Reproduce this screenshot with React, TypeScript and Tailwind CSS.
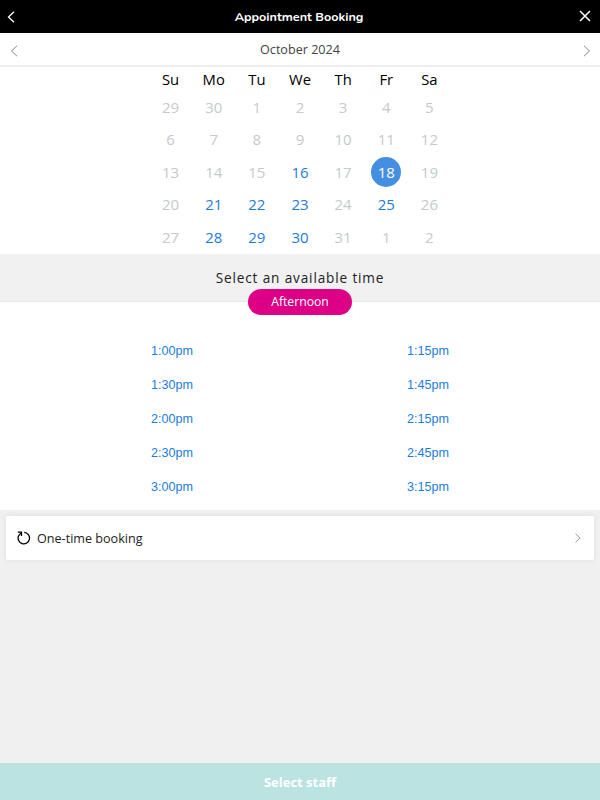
const weekdays = ['Su', 'Mo', 'Tu', 'We', 'Th', 'Fr', 'Sa'];

const days = [
	29, 30, 1, 2, 3, 4, 5,
	6, 7, 8, 9, 10, 11, 12,
	13, 14, 15, 16, 17, 18, 19,
	20, 21, 22, 23, 24, 25, 26,
	27, 28, 29, 30, 31, 1, 2,
];

// positions in the grid, since the leading and trailing days repeat numbers
const available = [17, 22, 23, 24, 26, 29, 30, 31];
const selected = 19;

const times = [
	'1:00pm', '1:15pm',
	'1:30pm', '1:45pm',
	'2:00pm', '2:15pm',
	'2:30pm', '2:45pm',
	'3:00pm', '3:15pm',
];

const Chevron = ({ points, className }: { points: string; className: string }) => (
	<svg viewBox="0 0 8 12" className={className} fill="none" stroke="currentColor">
		<polyline points={points} />
	</svg>
);

const LEFT = '7,0.8 1.5,6 7,11.2';
const RIGHT = '1,0.8 6.5,6 1,11.2';

const dayClass = (index: number) => {
	if (index === selected) return 'bg-[#458fe3] text-white font-normal';
	if (available.includes(index)) return 'text-[#1b7ce0] font-normal';
	return 'text-[#c3cbcc]';
};

const Header = () => (
	<header className="flex h-[33px] items-center justify-between bg-black pr-[9px] pl-[7px] text-white">
		<button className="w-3">
			<Chevron points={LEFT} className="h-3 w-2 stroke-[1.3]" />
		</button>
		<h1 className="pt-px font-['Nunito','Open_Sans',sans-serif] text-[12.6px] font-bold">Appointment Booking</h1>
		<button className="flex w-3 justify-end">
			<svg viewBox="0 0 12 12" className="mb-px size-3 stroke-[1.5]" stroke="currentColor">
				<path d="M1 1l10 10M11 1L1 11" />
			</svg>
		</button>
	</header>
);

const Calendar = () => (
	<section className="h-[221px]">
		<div className="flex h-[34px] items-center justify-between border-b-2 border-[#ebeff0] pt-[3px] px-[9.5px] text-[#7c898c]">
			<Chevron points={LEFT} className="h-3 w-2" />
			<h2 className="text-[12.6px] text-[#444]">October 2024</h2>
			<Chevron points={RIGHT} className="h-3 w-2" />
		</div>
		<div className="mx-auto grid w-[302px] grid-cols-7 text-center text-[15px] font-[370]">
			{weekdays.map((day) => (
				<div key={day} className="h-[23.5px] text-[14.8px] leading-[24px] font-normal text-black">{day}</div>
			))}
			{days.map((day, i) => (
				<div key={i} className="flex h-[32.6px] items-center justify-center">
					<span className={`flex size-[30px] items-center justify-center rounded-full ${dayClass(i)}`}>{day}</span>
				</div>
			))}
		</div>
	</section>
);

const Times = () => (
	<section>
		<div className="flex h-12 flex-col items-center border-b border-[#e4eaeb] bg-[#f1f1f1] pt-[14px]">
			<p className="h-[21px] shrink-0 text-[13.6px] leading-[20px] tracking-[0.85px] text-[#222]">Select an available time</p>
			<div className="h-[26px] w-[104px] shrink-0 rounded-full bg-[#dd0086] text-center text-[12.2px] leading-[26px] text-white">
				Afternoon
			</div>
		</div>
		<div className="grid h-[208px] grid-cols-[256px_256px] content-start justify-center pt-[32px] font-['Liberation_Sans',Arial,sans-serif]">
			{times.map((time) => (
				<div key={time} className="h-[34px] text-center text-[12.6px] leading-[34px] text-[#1b7ce0]">{time}</div>
			))}
		</div>
	</section>
);

export default function App() {
	return (
		<main className="flex h-[800px] w-[600px] flex-col bg-[#f0f0f0] font-['Open_Sans','Noto_Sans',sans-serif]">
			<Header />
			<div className="bg-white">
				<Calendar />
				<Times />
			</div>
			<div className="mx-[6px] mt-[6px] flex h-[44px] items-center rounded-[2px] bg-white pr-[12px] pl-[11px] text-[#222] shadow-[0_0_5px_rgba(0,0,0,0.08)]">
				<svg viewBox="0 0 14 14" className="mr-[6px] h-[14px] w-[14px] text-black" fill="none" stroke="currentColor" strokeWidth="1.3">
					<path d="M7.2 1.4A5.7 5.7 0 1 1 1.6 4.8L4.2 1.6" />
					<path d="M0.8 1.2H4.5V5" />
				</svg>
				<span className="pt-[2px] text-[12.6px]">One-time booking</span>
				<Chevron points={RIGHT} className="ml-auto h-[10px] w-[8px] text-[#888]" />
			</div>
			<button className="mt-auto h-[37px] bg-[#bae3e2] pt-[2px] text-[13px] font-bold text-white">Select staff</button>
		</main>
	);
}
